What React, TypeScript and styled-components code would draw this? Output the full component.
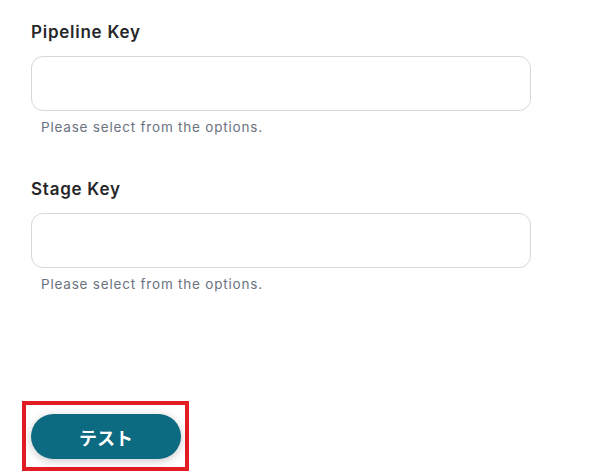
import { createGlobalStyle } from 'styled-components'
import styled from 'styled-components'

const GlobalStyle = createGlobalStyle`
  html, body {
    margin: 0;
    padding: 0;
    background: #ffffff;
  }
  body {
    font-family: Inter, "Noto Sans", "Noto Sans CJK JP", sans-serif;
  }
`

const Page = styled.div`
  width: 592px;
  height: 472px;
  box-sizing: border-box;
  padding: 20px 0 0 31px;
  display: flex;
  flex-direction: column;
  overflow: hidden;
`

const Field = styled.div`
  display: flex;
  flex-direction: column;
  margin-bottom: 41px;
`

const Label = styled.div`
  font-size: 17px;
  line-height: 24px;
  font-weight: 600;
  color: #27272a;
  letter-spacing: 0.75px;
  margin-bottom: 12px;
`

const Input = styled.input`
  width: 500px;
  height: 55px;
  box-sizing: border-box;
  border: 1px solid #d4d7dd;
  border-radius: 12px;
  background: #ffffff;
  outline: none;
  padding: 0 14px;
  font-family: inherit;
  font-size: 15px;
`

const Help = styled.div`
  margin-top: 7px;
  padding-left: 10px;
  font-size: 13.5px;
  line-height: 18px;
  color: #6b7280;
  letter-spacing: 0.8px;
`

const Highlight = styled.div`
  align-self: flex-start;
  margin: 67px 0 0 -9px;
  border: 4px solid #e31b23;
  padding: 9px 4px 8px 5px;
`

const TestButton = styled.button`
  width: 150px;
  height: 45px;
  border: none;
  border-radius: 23px;
  background: #0c6a81;
  color: #ffffff;
  font-family: "Noto Sans CJK JP", sans-serif;
  font-size: 18px;
  font-weight: 700;
  box-shadow: 0 2px 8px rgba(0, 0, 0, 0.22);
  cursor: pointer;
`

const fields = ['Pipeline Key', 'Stage Key']

export default function App () {
  return (
    <>
      <GlobalStyle />
      <Page>
        {fields.map((name) => (
          <Field key={name}>
            <Label>{name}</Label>
            <Input />
            <Help>Please select from the options.</Help>
          </Field>
        ))}
        <Highlight>
          <TestButton>テスト</TestButton>
        </Highlight>
      </Page>
    </>
  )
}
